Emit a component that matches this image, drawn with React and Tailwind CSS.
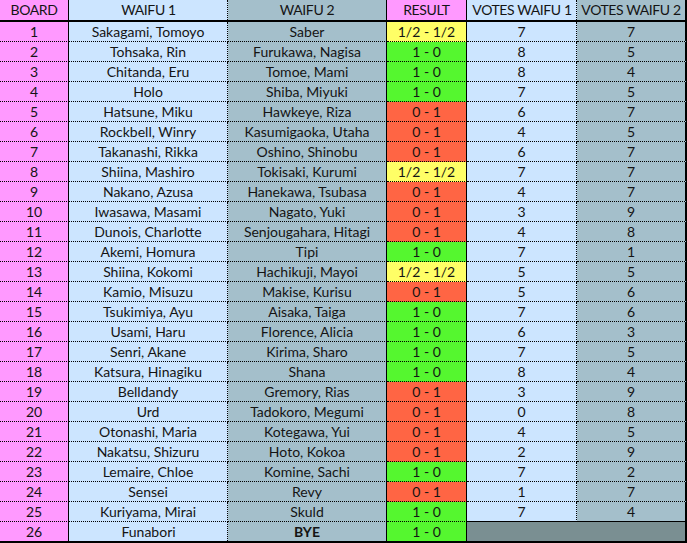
const rows = [
  [1, 'Sakagami, Tomoyo', 'Saber', 'd', 7, 7],
  [2, 'Tohsaka, Rin', 'Furukawa, Nagisa', 'w', 8, 5],
  [3, 'Chitanda, Eru', 'Tomoe, Mami', 'w', 8, 4],
  [4, 'Holo', 'Shiba, Miyuki', 'w', 7, 5],
  [5, 'Hatsune, Miku', 'Hawkeye, Riza', 'l', 6, 7],
  [6, 'Rockbell, Winry', 'Kasumigaoka, Utaha', 'l', 4, 5],
  [7, 'Takanashi, Rikka', 'Oshino, Shinobu', 'l', 6, 7],
  [8, 'Shiina, Mashiro', 'Tokisaki, Kurumi', 'd', 7, 7],
  [9, 'Nakano, Azusa', 'Hanekawa, Tsubasa', 'l', 4, 7],
  [10, 'Iwasawa, Masami', 'Nagato, Yuki', 'l', 3, 9],
  [11, 'Dunois, Charlotte', 'Senjougahara, Hitagi', 'l', 4, 8],
  [12, 'Akemi, Homura', 'Tipi', 'w', 7, 1],
  [13, 'Shiina, Kokomi', 'Hachikuji, Mayoi', 'd', 5, 5],
  [14, 'Kamio, Misuzu', 'Makise, Kurisu', 'l', 5, 6],
  [15, 'Tsukimiya, Ayu', 'Aisaka, Taiga', 'w', 7, 6],
  [16, 'Usami, Haru', 'Florence, Alicia', 'w', 6, 3],
  [17, 'Senri, Akane', 'Kirima, Sharo', 'w', 7, 5],
  [18, 'Katsura, Hinagiku', 'Shana', 'w', 8, 4],
  [19, 'Belldandy', 'Gremory, Rias', 'l', 3, 9],
  [20, 'Urd', 'Tadokoro, Megumi', 'l', 0, 8],
  [21, 'Otonashi, Maria', 'Kotegawa, Yui', 'l', 4, 5],
  [22, 'Nakatsu, Shizuru', 'Hoto, Kokoa', 'l', 2, 9],
  [23, 'Lemaire, Chloe', 'Komine, Sachi', 'w', 7, 2],
  [24, 'Sensei', 'Revy', 'l', 1, 7],
  [25, 'Kuriyama, Mirai', 'Skuld', 'w', 7, 4],
];

const resultText = { w: '1 - 0', l: '0 - 1', d: '1/2 - 1/2' };
const resultBg = { w: 'bg-[#55f72f]', l: 'bg-[#ff6544]', d: 'bg-[#ffff66]' };

const cell = 'flex items-center justify-center h-[20px] border-b border-dotted border-black';
const head = 'flex items-center justify-center h-[22px] border-b-2 border-black tracking-[-0.4px]';
const solidR = { borderRightStyle: 'solid' };

export default function App() {
  return (
    <div
      className="w-[687px] h-[543px] bg-white text-[#141414] text-[14px] leading-none"
      style={{ fontFamily: 'Lato, "Open Sans", sans-serif' }}
    >
      <div className="grid grid-cols-[69px_159px_159px_80px_110px_110px]">
        {/* header */}
        <div className={`${head} bg-[#ff99ff] border-r`}>BOARD</div>
        <div className={`${head} bg-[#cce5ff] relative`}>
          WAIFU 1
          <span className="absolute right-0 top-0 bottom-0 border-r border-dotted border-black" />
        </div>
        <div className={`${head} bg-[#a4bfcb] border-r`}>WAIFU 2</div>
        <div className={`${head} bg-[#ff99ff] border-r`}>RESULT</div>
        <div className={`${head} bg-[#cce5ff] relative`}>
          VOTES WAIFU 1
          <span className="absolute right-0 top-0 bottom-0 border-r border-dotted border-black" />
        </div>
        <div className={`${head} bg-[#a4bfcb] border-r-2`}>VOTES WAIFU 2</div>

        {rows.map(([board, w1, w2, res, v1, v2]) => {
          const last = board === 25;
          return (
            <div key={board} className="contents">
              <div className={`${cell} bg-[#ff99ff] border-r`} style={solidR}>{board}</div>
              <div className={`${cell} bg-[#cce5ff] border-r`}>{w1}</div>
              <div className={`${cell} bg-[#a4bfcb] border-r`} style={solidR}>{w2}</div>
              <div className={`${cell} ${resultBg[res]} border-r`} style={solidR}>{resultText[res]}</div>
              <div className={`${cell} bg-[#cce5ff] border-r`} style={last ? { borderBottomStyle: 'solid' } : undefined}>{v1}</div>
              <div className={`${cell} bg-[#a4bfcb] border-r-2`} style={last ? { borderStyle: 'solid' } : solidR}>{v2}</div>
            </div>
          );
        })}

        {/* row 26 */}
        <div className="flex items-center justify-center h-[21px] bg-[#ff99ff] border-b-2 border-r border-black">26</div>
        <div className="flex items-center justify-center h-[21px] bg-[#cce5ff] border-b-2 border-black relative">
          Funabori
          <span className="absolute right-0 top-0 bottom-0 border-r border-dotted border-black" />
        </div>
        <div className="flex items-center justify-center h-[21px] bg-[#a4bfcb] border-b-2 border-r border-black font-bold">BYE</div>
        <div className="flex items-center justify-center h-[21px] bg-[#55f72f] border-b-2 border-r border-black">1 - 0</div>
        <div className="col-span-2 h-[21px] bg-[#7a8f92] border-b-2 border-r-2 border-black" />
      </div>
    </div>
  );
}
